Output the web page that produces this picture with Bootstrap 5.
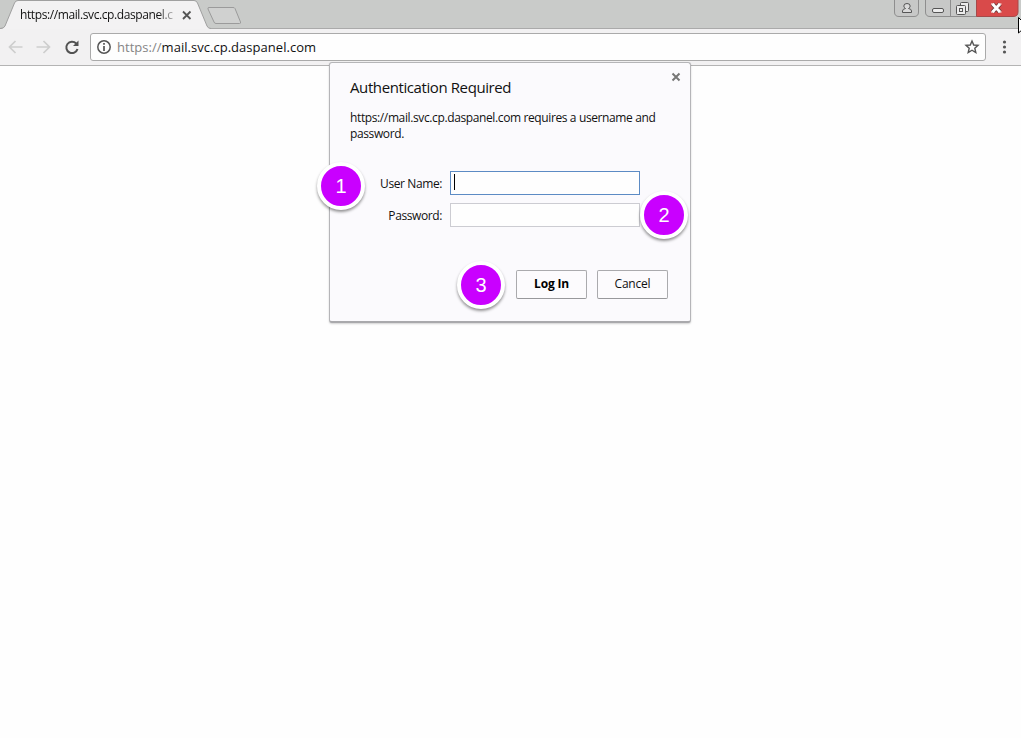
<!DOCTYPE html>
<html lang="en">
<head>
<meta charset="utf-8">
<meta name="viewport" content="width=device-width, initial-scale=1">
<title>Authentication Required</title>
<link href="https://cdn.jsdelivr.net/npm/bootstrap@5.3.0/dist/css/bootstrap.min.css" rel="stylesheet">
<style>
body{height:738px;overflow:hidden;background:#fefefe;font-family:"Open Sans","Noto Sans",sans-serif;font-size:12px;line-height:16px;color:#111}
.tabstrip{height:29px;background:#c9cbc9}
.tabstrip svg{display:block}
.tab-title{left:20px;top:7px;width:158px;font-size:12px;letter-spacing:-.4px;-webkit-mask-image:linear-gradient(90deg,#000 138px,transparent 158px);mask-image:linear-gradient(90deg,#000 138px,transparent 158px)}
.toolbar{height:37px;background:#f2f1f2;border-bottom:1px solid #b4b4b4}
.toolbar svg{flex:none}
.omnibox{height:28px;width:896px;margin-left:10px;background:#fefefe;border:1px solid #aaa;border-radius:3px;font-size:13px}
.address{letter-spacing:.03px}
.scheme{color:#858585}
.auth{left:329px;top:62px;width:362px;height:261px;background:#fbfafd;border:1px solid #b5b5b8;border-bottom:2px solid #a9a9ac;border-radius:3px;box-shadow:0 1px 2px rgba(0,0,0,.18);padding:14px 20px 0}
.auth h1{font-size:15px;line-height:20px;font-weight:400;margin:0 0 13px;letter-spacing:-.4px}
.auth p{margin:0;letter-spacing:-.38px;white-space:nowrap}
.fields{margin-top:29px;gap:8px}
.fields label{width:92px;text-align:right;margin-right:8px;letter-spacing:-.4px;padding-top:2px}
.fields .form-control{width:190px;height:24px;border:1px solid #ccccd2;border-radius:0;padding:0 4px;background:#fefefe;box-shadow:none}
.fields .form-control.active-field{border-color:#5c8bc4}
.caret{width:1px;height:16px;background:#000;left:454px;top:174px}
.actions{margin-top:43px;padding-right:2px;gap:10px}
.actions .btn{width:71px;height:29px;padding:0 0 2px;font-size:12px;line-height:16px;border:1px solid #aaaaad;border-bottom-color:#98989b;border-radius:2px;background:#fcfbfd;color:#111;letter-spacing:-.2px}
.actions .fw-bold{color:#000}
.step{width:48px;height:48px;border:4px solid #fff;border-radius:50%;background:#c900ff;color:#fff;font:20px/40px "Liberation Sans",Arial,sans-serif;text-align:center;box-shadow:0 2px 3px rgba(0,0,0,.42)}
.step-1{left:317px;top:162px}.step-2{left:640px;top:191px}.step-3{left:457px;top:261px}
.close-dialog{left:671px;top:72px}
.pointer{left:1018px;top:16px}
</style>
</head>
<body class="position-relative">
<header>
<div class="tabstrip position-relative">
<svg width="1021" height="29">
<path d="M0 28.500H1021" stroke="#aaa"/>
<path d="M0 29Q4 28.500 5 26L14.500 3Q15.500 .5 18 .5H194Q196.500 .5 197.500 3L207 26Q208 28.500 211 29Z" fill="#f3f2f3"/>
<path d="M0 28.500Q4 28.500 5 26L14.500 3Q15.500 .5 18 .5H194Q196.500 .5 197.500 3L207 26Q208 28.500 211 28.500" fill="none" stroke="#a0a0a0"/>
<path d="M209 7.500H233Q234.500 7.500 235 8.500L240.500 22Q241 23.500 239.500 23.500H216Q214.500 23.500 214 22L208 9Q207.500 7.500 209 7.500Z" fill="#d0d1d0" stroke="#9b9b9b"/>
<path d="M183 11.500L190.500 19M190.500 11.500L183 19" stroke="#555" stroke-width="1.800"/>
<g fill="#c7c8c7" stroke="#8e8e8e">
<path d="M894.500 0V12Q894.500 16.500 899 16.500H914Q918.500 16.500 918.500 12V0"/>
<path d="M925.500 0V12Q925.500 16.500 930 16.500H976.500V0M950.500 0V16"/>
</g>
<path d="M977 0H1018V12Q1018 16.500 1013 16.500H977Z" fill="#d94a4a"/>
<path d="M976.500 0V16.500H1013Q1018 16.500 1018 12V0" fill="none" stroke="#a64949"/>
<g fill="#ececec" stroke="#555">
<path d="M902.500 12.500V11Q902.500 9 905.500 8.500Q903.800 7.500 903.800 6Q903.800 3.500 907 3.500Q910.200 3.500 910.200 6Q910.200 7.500 908.500 8.500Q911.500 9 911.500 11V12.500Z" fill="#dadada"/>
<rect x="932.500" y="8.500" width="11" height="4" rx="1.500"/>
<rect x="960.500" y="2.500" width="8" height="9" rx="1"/>
<rect x="956.500" y="5.500" width="9" height="9" rx="1"/>
<rect x="959.500" y="8.500" width="3" height="3"/>
</g>
<path d="M992.500 4L1000 12M1000 4L992.500 12" stroke="#713b3b" stroke-width="4.700"/>
<path d="M992.500 4L1000 12M1000 4L992.500 12" stroke="#fff" stroke-width="2.800"/>
<path d="M991 4H994.500M998 4H1001.500M991 12H994.500M998 12H1001.500" stroke="#fff" stroke-width="1.200"/>
</svg>
<div class="tab-title position-absolute text-nowrap">https://mail.svc.cp.daspanel.c</div>
</div>
<div class="toolbar d-flex align-items-center">
<svg width="80" height="36" fill="none" stroke-width="1.700">
<path d="M22.500 18H9.500M15.500 12L9.500 18L15.500 24M36.500 18H49.500M43.500 12L49.500 18L43.500 24" stroke="#cecece"/>
<path d="M76.200 14.500A5.700 5.700 0 1 0 77.500 20" stroke="#525252" stroke-width="2"/>
<path d="M78.500 11.500V17H73Z" fill="#525252"/>
</svg>
<div class="omnibox d-flex align-items-center">
<svg width="26" height="26" fill="none" stroke="#555"><circle cx="13" cy="13" r="6.200" stroke-width="1.500"/><path d="M13 12V17M13 9V10.700" stroke-width="1.700"/></svg>
<span class="address"><span class="scheme">https://</span>mail.svc.cp.daspanel.com</span>
<svg class="ms-auto" width="26" height="26" fill="none" stroke="#555" stroke-width="1.400"><path d="M13 7L14.700 11L19 11.400L15.800 14.200L16.800 18.500L13 16.200L9.200 18.500L10.200 14.200L7 11.400L11.300 11Z"/></svg>
</div>
<svg width="35" height="36" fill="#555"><circle cx="18.500" cy="13" r="1.600"/><circle cx="18.500" cy="18" r="1.600"/><circle cx="18.500" cy="23" r="1.600"/></svg>
</div>
</header>
<main class="auth position-absolute">
<h1>Authentication Required</h1>
<p>https://mail.svc.cp.daspanel.com requires a username and<br>password.</p>
<form class="fields d-flex flex-column">
<div class="d-flex align-items-center"><label for="user">User Name:</label><input id="user" class="form-control active-field" type="text"></div>
<div class="d-flex align-items-center"><label for="pass">Password:</label><input id="pass" class="form-control" type="password"></div>
</form>
<div class="actions d-flex justify-content-end"><button class="btn fw-bold">Log In</button><button class="btn">Cancel</button></div>
</main>
<div class="caret position-absolute"></div>
<svg class="close-dialog position-absolute" width="10" height="10"><path d="M1.500 1.500L8.500 8.500M8.500 1.500L1.500 8.500" stroke="#777" stroke-width="2"/></svg>
<div class="step step-1 position-absolute">1</div>
<div class="step step-2 position-absolute">2</div>
<div class="step step-3 position-absolute">3</div>
<svg class="pointer position-absolute" width="3" height="20"><path d="M.5 1.500V17L5 13V6Z" fill="#fff" stroke="#000"/></svg>
<script src="https://cdn.jsdelivr.net/npm/bootstrap@5.3.0/dist/js/bootstrap.bundle.min.js"></script>
</body>
</html>
